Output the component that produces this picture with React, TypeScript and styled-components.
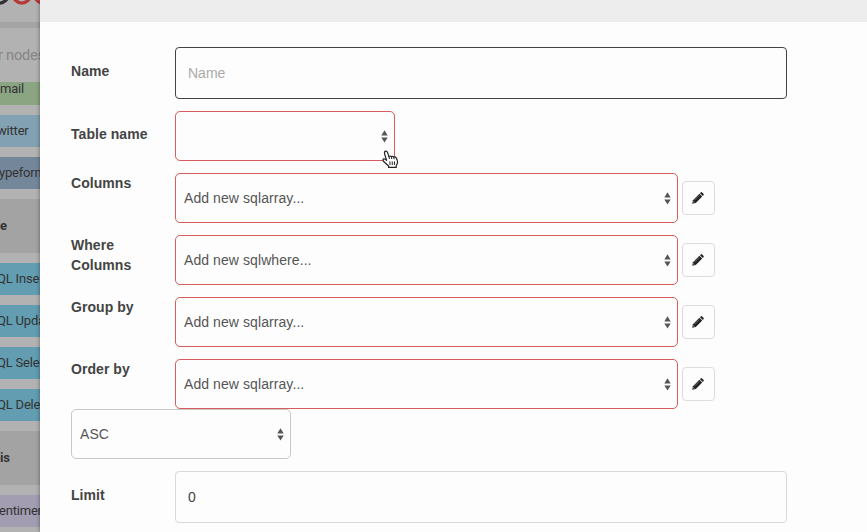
import React from 'react';
import styled, { createGlobalStyle } from 'styled-components';

const GlobalStyle = createGlobalStyle`
  *, *::before, *::after { box-sizing: border-box; }
  body { margin: 0; overflow: hidden; background: #b2b2b2; }
`;

const Screen = styled.div`
  display: flex;
  width: 867px;
  height: 532px;
  overflow: hidden;
  font-family: "Liberation Sans", Arial, sans-serif;
  font-size: 14px;
  color: #444;
`;

const Sidebar = styled.aside`
  flex: 0 0 40px;
  height: 532px;
  overflow: hidden;
  background: #b2b2b2;
  color: #333;
  font-family: Roboto, sans-serif;
  font-size: 13px;
  letter-spacing: -0.2px;
  white-space: nowrap;
`;

const Brand = styled.div`
  height: 28px;
  border-bottom: 6px solid #a4a4a4;
  svg { display: block; }
`;

const Search = styled.div`
  height: 54px;
  line-height: 56px;
  font-size: 14.5px;
  color: #858585;
  text-indent: -2px;
`;

const Nodes = styled.div`
  display: flex;
  flex-direction: column;
  gap: 10px;
  padding-bottom: 10px;
`;

const Node = styled.div<{ $color: string; $shift?: number; $cut?: boolean }>`
  height: ${p => (p.$cut ? 23 : 32)}px;
  line-height: ${p => (p.$cut ? 14 : 31)}px;
  background: ${p => p.$color};
  text-indent: ${p => p.$shift ?? 0}px;
`;

const Section = styled.div`
  height: 54px;
  margin-bottom: 10px;
  line-height: 54px;
  background: #a3a3a3;
  font-weight: 700;
`;

const Modal = styled.main`
  position: relative;
  flex: 1;
  background: #fdfdfd;
  box-shadow: 0 0 4px rgba(0, 0, 0, 0.45);
`;

const ModalHeader = styled.header`
  height: 22px;
  background: #ededed;
`;

const Form = styled.form`
  display: flex;
  flex-direction: column;
  align-items: flex-start;
  gap: 12px;
  padding: 25px 0 0 31px;
`;

const Row = styled.div`
  display: flex;
  align-items: flex-start;
`;

const Label = styled.label<{ $top: number }>`
  width: 104px;
  padding: ${p => p.$top}px 12px 0 0;
  font-weight: 700;
  font-size: 14px;
  line-height: 20px;
  letter-spacing: 0.05px;
`;

const Input = styled.input<{ $focused?: boolean }>`
  width: 612px;
  height: 52px;
  padding: 0 12px;
  border: 1px solid ${p => (p.$focused ? '#444' : '#d9d9d9')};
  border-radius: 4px;
  background: #fdfdfd;
  outline: none;
  font: inherit;
  color: #444;
  &::placeholder { color: #aaa; opacity: 1; }
`;

const SelectBox = styled.div<{ $w: number; $invalid?: boolean }>`
  display: flex;
  align-items: center;
  justify-content: space-between;
  width: ${p => p.$w}px;
  height: 50px;
  padding: 0 6px 0 8px;
  border: 1px solid ${p => (p.$invalid ? '#d95c5c' : '#c8c8c8')};
  border-radius: 5px;
  color: #555;
  letter-spacing: 0.08px;
`;

const EditButton = styled.button`
  display: flex;
  align-items: center;
  justify-content: center;
  width: 33px;
  height: 34px;
  margin: 8px 0 0 4px;
  padding: 0 1px 0 0;
  border: 1px solid #dcdcdc;
  border-radius: 4px;
  background: #fdfdfd;
`;

const OrderGroup = styled.div`
  display: flex;
  flex-direction: column;
`;

const Pointer = styled.svg`
  position: absolute;
  left: 342px;
  top: 150px;
`;

const Arrows = () => (
  <svg width="7" height="13" viewBox="0 0 7 13" fill="#555">
    <path d="M3.5 0.2L6.7 5.4H0.3Z" />
    <path d="M0.3 7.4H6.7L3.5 12.6Z" />
  </svg>
);

const Pencil = () => (
  <svg width="12" height="12" viewBox="0 0 12 12">
    <path d="M0.2 11.8L1 8.2L7.4 1.8L10.2 4.6L3.8 11Z" fill="#222" />
    <path d="M8 1.2L8.9 0.3Q9.5 -0.1 10.1 0.4L11.6 1.9Q12 2.5 11.6 3.1L10.8 4Z" fill="#222" />
    <path d="M2.5 8.2L7.3 3.4" stroke="#999" strokeWidth="0.6" />
    <path d="M1.2 9.5L2.5 10.8" stroke="#eee" strokeWidth="0.7" />
  </svg>
);

const Hand = () => (
  <Pointer width="17" height="19" viewBox="0 0 17 19">
    <path
      d="M4.6 10.4L2.7 4.2Q2 1.6 3.5 1.1Q5 .8 5.6 2.6L6.9 6.6Q8 5.4 9.2 6.6Q10.6 5.7 11.6 7.2Q13.3 6.3 14.2 7.9Q15.7 10.5 15.5 12.5Q15.2 14.4 14.2 15.6V17.4H6.6V16L1.4 11.2Q.4 9.4 1.7 8.9Q3 8.7 4.6 10.4Z"
      fill="#fff" stroke="#222" strokeWidth="1.2" strokeLinejoin="round"
    />
    <path d="M6.9 6.6L7.5 9M9.2 6.6L9.8 9M11.6 7.2L12.2 9.3M7.8 11.4L8.1 15M10.2 11.4L10.3 15M12.5 11.4L12.4 15" fill="none" stroke="#222" strokeWidth="1" />
  </Pointer>
);

const Logo = () => (
  <svg width="40" height="22" viewBox="0 0 40 22" fill="none" strokeWidth="3.4">
    <circle cx="-0.5" cy="-5.3" r="8.4" stroke="#303036" />
    <circle cx="21.8" cy="-5.3" r="8.4" stroke="#b63936" />
    <circle cx="43.3" cy="-5.3" r="8.4" stroke="#b63936" />
  </svg>
);

const queries = [
  { label: 'Columns', text: 'Add new sqlarray...' },
  { label: 'Where Columns', text: 'Add new sqlwhere...' },
  { label: 'Group by', text: 'Add new sqlarray...' },
];

const QueryRow = ({ label, text }: { label: string; text: string }) => (
  <Row>
    <Label $top={0}>{label}</Label>
    <SelectBox $w={503} $invalid>{text}<Arrows /></SelectBox>
    <EditButton type="button" aria-label="Edit"><Pencil /></EditButton>
  </Row>
);

export default function App() {
  return (
    <>
      <GlobalStyle />
      <Screen>
        <Sidebar>
          <Brand><Logo /></Brand>
          <Search>r nodes</Search>
          <Nodes>
            <Node $color="#8ba583" $cut>mail</Node>
            <Node $color="#82a2b3" $shift={-3}>witter</Node>
            <Node $color="#74879a" $shift={-1}>ypeform</Node>
          </Nodes>
          <Section>e</Section>
          <Nodes>
            <Node $color="#629db2" $shift={-3}>QL Inse</Node>
            <Node $color="#629db2" $shift={-3}>QL Upda</Node>
            <Node $color="#629db2" $shift={-3}>QL Sele</Node>
            <Node $color="#629db2" $shift={-3}>QL Dele</Node>
          </Nodes>
          <Section>is</Section>
          <Nodes>
            <Node $color="#a39db2" $shift={-1}>entimen</Node>
          </Nodes>
        </Sidebar>
        <Modal>
          <ModalHeader />
          <Form>
            <Row>
              <Label $top={14}>Name</Label>
              <Input $focused placeholder="Name" />
            </Row>
            <Row>
              <Label $top={13}>Table name</Label>
              <SelectBox $w={220} $invalid><span /><Arrows /></SelectBox>
            </Row>
            {queries.map(q => <QueryRow key={q.label} {...q} />)}
            <OrderGroup>
              <QueryRow label="Order by" text="Add new sqlarray..." />
              <SelectBox $w={220}>ASC<Arrows /></SelectBox>
            </OrderGroup>
            <Row>
              <Label $top={14}>Limit</Label>
              <Input defaultValue="0" />
            </Row>
          </Form>
          <Hand />
        </Modal>
      </Screen>
    </>
  );
}
